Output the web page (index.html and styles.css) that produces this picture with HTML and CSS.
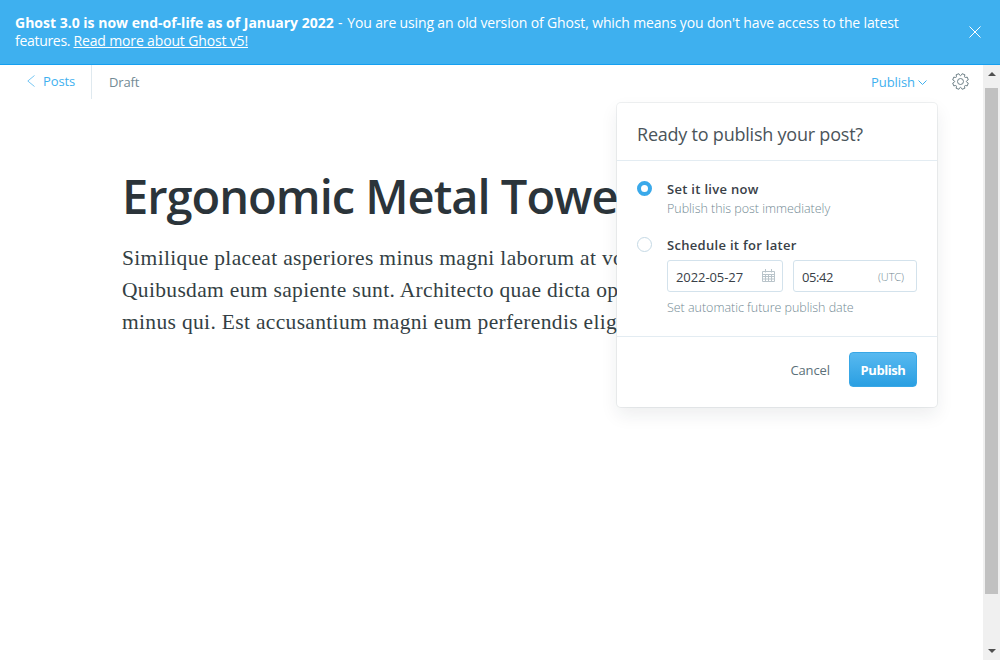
FILE: index.html
```html
<!DOCTYPE html>
<html lang="en">
<head>
<meta charset="utf-8">
<title>Editor - Ghost</title>
<link rel="stylesheet" href="styles.css">
</head>
<body>
<div class="app">
  <aside class="alert">
    <div class="alert-content"><b>Ghost 3.0 is now end-of-life as of January 2022</b><span class="alert-dash"> - </span><span class="alert-text">You are using an old version of Ghost, which means you don't have access to the latest</span><br><span class="alert-features">features. </span><a class="alert-link" href="#">Read more about Ghost v5!</a></div>
    <svg class="alert-close" viewBox="0 0 12 12"><path d="M.5.5l11 11M11.5.5l-11 11"/></svg>
  </aside>
  <div class="viewport">
    <main class="editor">
      <header class="editor-header">
        <a class="back" href="#"><svg class="back-icon" viewBox="0 0 8 12"><path d="M7.500.5L.8 6l6.700 5.500"/></svg><span>Posts</span></a>
        <span class="status">Draft</span>
        <div class="actions">
          <a class="publish-trigger" href="#"><span>Publish</span><svg class="chevron" viewBox="0 0 9 5"><path d="M.5.5l4 4 4-4"/></svg></a>
          <svg class="gear" viewBox="0 0 24 24"><circle cx="12" cy="12" r="4.200"/><path d="M9.700 1Q12 6.500 14.300 1L18.200 2.500Q16.200 7.800 21.500 5.800L23 9.700Q17.500 12 23 14.300L21.500 18.200Q16.200 16.200 18.200 21.500L14.300 23Q12 17.500 9.700 23L5.800 21.500Q7.800 16.200 2.500 18.200L1 14.300Q6.500 12 1 9.700L2.500 5.800Q7.800 7.800 5.800 2.500Z"/></svg>
        </div>
      </header>
      <article class="post">
        <h1 class="post-title">Ergonomic Metal Towels</h1>
        <p class="post-body">Similique placeat asperiores minus magni laborum at voluptas.<br>Quibusdam eum sapiente sunt. Architecto quae dicta optio.<br>minus qui. Est accusantium magni eum perferendis eligendi.</p>
      </article>
    </main>
    <div class="scrollbar">
      <span class="arrow arrow-up"></span>
      <span class="thumb"></span>
      <span class="arrow arrow-down"></span>
    </div>
  </div>
  <section class="menu">
    <header class="menu-header">Ready to publish your post?</header>
    <div class="menu-body">
      <div class="option">
        <span class="radio radio-on"></span>
        <div class="option-main">
          <div class="label">Set it live now</div>
          <div class="desc">Publish this post immediately</div>
        </div>
      </div>
      <div class="option option-later">
        <span class="radio"></span>
        <div class="option-main">
          <div class="label">Schedule it for later</div>
          <div class="fields">
            <div class="field field-date"><span>2022-05-27</span>
              <svg class="calendar" viewBox="0 0 13 13"><path d="M.5 2.500h12v10H.5zM.5 5.500h12M.5 7.500h12M.5 10h12M3.500 5v7.500M6.500 5v7.500M9.500 5v7.500M3.500 0v3.500M9.500 0v3.500"/></svg></div>
            <div class="field field-time"><span class="time">05:42</span><span class="zone">(UTC)</span></div>
          </div>
          <div class="desc desc-later">Set automatic future publish date</div>
        </div>
      </div>
    </div>
    <footer class="menu-footer"><a class="cancel" href="#">Cancel</a><button class="publish">Publish</button></footer>
  </section>
</div>
</body>
</html>
```
FILE: styles.css
```css
* { box-sizing: border-box; }
body {
  margin: 0;
  font-family: "Open Sans", "Noto Sans", sans-serif;
  font-size: 13px;
  color: #394047;
  background: #fff;
}
a { color: inherit; text-decoration: none; }
svg { fill: none; stroke: currentColor; }

.app {
  position: relative;
  display: flex;
  flex-direction: column;
  width: 1000px;
  height: 660px;
  overflow: hidden;
}

.alert {
  display: flex;
  align-items: center;
  justify-content: space-between;
  flex: none;
  height: 65px;
  padding: 0 19px 0 15px;
  color: #fff;
  background: #3eb0ef;
  border-bottom: 1px solid #159ff0;
}
.alert-content { font-size: 14px; line-height: 18px; white-space: pre; }
.alert-dash { letter-spacing: .6px; }
.alert-text { letter-spacing: -.145px; }
.alert-features { letter-spacing: -.3px; }
.alert-link { letter-spacing: -.15px; text-decoration: underline; }
.alert-close { width: 12px; height: 12px; }

.viewport { display: flex; flex: 1; min-height: 0; }
.editor { flex: 1; min-width: 0; }
.editor-header { display: flex; height: 34px; line-height: 34px; }
.back {
  display: flex;
  align-items: center;
  gap: 8px;
  width: 92px;
  padding: 0 0 2px 27px;
  letter-spacing: -.12px;
  color: #3eb0ef;
  border-right: 1px solid #dfe9ef;
}
.back-icon { width: 8px; height: 12px; opacity: .7; }
.status { padding-left: 17px; letter-spacing: -.15px; color: #738a94; }
.actions { display: flex; align-items: center; margin-left: auto; padding-right: 14px; }
.publish-trigger { display: flex; align-items: center; gap: 3px; letter-spacing: -.08px; color: #3eb0ef; }
.chevron { width: 9px; height: 5px; }
.gear { width: 17px; height: 17px; margin: 0 0 2px 25px; color: #6b7d85; stroke-width: 1.4; }

.post { width: 740px; padding: 67px 0 0 122px; white-space: nowrap; }
.post-title {
  margin: 0;
  font-size: 47px;
  line-height: 60px;
  font-weight: 600;
  letter-spacing: -1px;
  color: #2b343a;
}
.post-body {
  margin: 16px 0 0;
  font: 21.5px/32px "Liberation Serif", Georgia, serif;
  letter-spacing: .33px;
  color: #343f44;
}

.scrollbar {
  display: flex;
  flex-direction: column;
  align-items: center;
  width: 17px;
  background: #f0f0f0;
}
.thumb { width: 13px; height: 506px; margin-top: 12px; background: #c1c1c1; }
.arrow { border: 4px solid transparent; }
.arrow-up { margin-top: 7px; border-top-width: 0; border-bottom-color: #505050; }
.arrow-down { margin: auto 0 7px; border-bottom-width: 0; border-top-color: #505050; }

.menu {
  position: absolute;
  left: 617px;
  top: 103px;
  width: 320px;
  height: 304px;
  background: #fff;
  border-radius: 4px;
  box-shadow: 0 0 0 1px rgba(99,114,130,.1), 0 8px 18px rgba(27,39,51,.08);
}
.menu-header {
  height: 58px;
  padding: 0 20px;
  font-size: 18px;
  line-height: 62px;
  letter-spacing: -.22px;
  color: #4a545a;
  border-bottom: 1px solid #e3ecf2;
}
.menu-body { height: 176px; padding: 19px 20px 0; border-bottom: 1px solid #e3ecf2; }
.option { display: flex; gap: 15px; }
.option-later { margin-top: 17px; }
.option-main { width: 250px; }
.radio {
  flex: none;
  width: 15px;
  height: 15px;
  margin-top: 1px;
  border: 1px solid #c5d9e5;
  border-radius: 50%;
}
.radio-on { border: 4px solid #3aa9ea; }
.label { line-height: 18px; font-weight: 600; letter-spacing: .3px; }
.desc {
  margin-top: 1px;
  font-size: 12.5px;
  line-height: 20px;
  font-weight: 300;
  letter-spacing: -.03px;
  color: #738a94;
}
.fields { display: flex; gap: 10px; margin-top: 6px; }
.field {
  display: flex;
  align-items: center;
  justify-content: space-between;
  height: 32px;
  padding: 2px 8px 0;
  letter-spacing: -.08px;
  border: 1px solid #d3e2ec;
  border-radius: 3px;
}
.field-date { width: 116px; }
.field-time { width: 124px; padding-right: 12px; }
.time { letter-spacing: -.4px; }
.calendar { width: 13px; height: 13px; margin: 0 -1px 3px 0; color: #b9c4ca; }
.zone { margin-bottom: 2px; font-size: 11px; font-weight: 300; color: #738a94; }
.desc-later { margin-top: 6px; }
.menu-footer {
  display: flex;
  justify-content: flex-end;
  align-items: flex-start;
  gap: 19px;
  height: 69px;
  padding: 15px 20px 0;
}
.cancel { line-height: 36px; letter-spacing: -.1px; color: #5b7079; }
.publish {
  width: 68px;
  height: 35px;
  padding: 1px 0 0;
  font: bold 13px "Open Sans", sans-serif;
  letter-spacing: -.42px;
  color: #fff;
  background: linear-gradient(#58b9f0, #2a9fe2);
  border: 1px solid #38a7e6;
  border-radius: 4px;
}
```
